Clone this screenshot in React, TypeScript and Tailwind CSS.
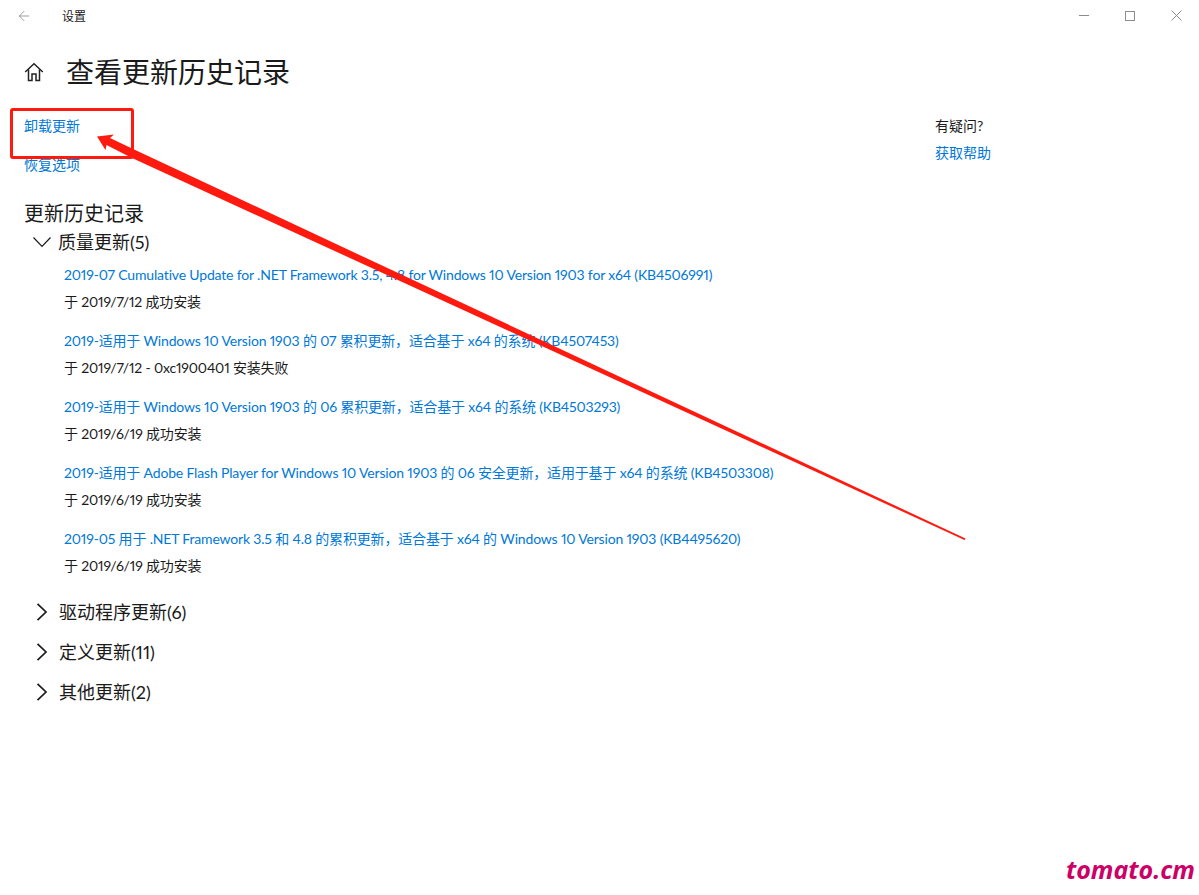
import { ArrowLeft } from 'lucide-react';

const font = { fontFamily: 'Lato, "Noto Sans CJK SC", sans-serif' };

const UPDATES = [
    {
        title: '2019-07 Cumulative Update for .NET Framework 3.5, 4.8 for Windows 10 Version 1903 for x64 (KB4506991)',
        status: '于 2019/7/12 成功安装',
    },
    {
        title: '2019-适用于 Windows 10 Version 1903 的 07 累积更新，适合基于 x64 的系统 (KB4507453)',
        status: '于 2019/7/12 - 0xc1900401 安装失败',
    },
    {
        title: '2019-适用于 Windows 10 Version 1903 的 06 累积更新，适合基于 x64 的系统 (KB4503293)',
        status: '于 2019/6/19 成功安装',
    },
    {
        title: '2019-适用于 Adobe Flash Player for Windows 10 Version 1903 的 06 安全更新，适用于基于 x64 的系统 (KB4503308)',
        status: '于 2019/6/19 成功安装',
    },
    {
        title: '2019-05 用于 .NET Framework 3.5 和 4.8 的累积更新，适合基于 x64 的 Windows 10 Version 1903 (KB4495620)',
        status: '于 2019/6/19 成功安装',
    },
];

const GROUPS = ['驱动程序更新(6)', '定义更新(11)', '其他更新(2)'];

const WindowButtons = () => (
    <svg className="mr-[17px] text-[#8c8c8c]" width="103" height="12" viewBox="0 0 103 12" fill="none" stroke="currentColor">
        <path d="M0 5.5H10" />
        <rect x="46.5" y="1.5" width="9" height="9" />
        <path d="M92.5 .5L102.5 10.5M102.5 .5L92.5 10.5" />
    </svg>
);

const HomeIcon = () => (
    <svg className="ml-[24px]" width="20" height="20" viewBox="0 0 20 20" fill="none" stroke="#222" strokeWidth="1.5">
        <path d="M1.2 10L10 1.8 18.8 10" />
        <path d="M4.5 7.5V18.5H8V12H12V18.5H15.5V7.5" />
    </svg>
);

const Expanded = () => (
    <svg className="ml-[9px]" width="18" height="12" viewBox="0 0 18 12" fill="none" stroke="#1a1a1a" strokeWidth="1.2">
        <path d="M.5 1.5L9 10.5 17.5 1.5" />
    </svg>
);

const Collapsed = () => (
    <svg className="ml-[12px]" width="12" height="18" viewBox="0 0 12 18" fill="none" stroke="#1a1a1a" strokeWidth="1.7">
        <path d="M1.5 .8L10 9 1.5 17.2" />
    </svg>
);

export default function App() {
    return (
        <div className="relative h-[895px] w-[1199px] overflow-hidden bg-white text-[#1a1a1a] proportional-nums" style={font}>
            {/* title bar */}
            <div className="flex h-8 items-center">
                <ArrowLeft className="ml-[16px] h-4 w-4 text-[#8c8c8c]" strokeWidth={1.25} />
                <span className="ml-[30px] mt-0.5 text-xs leading-4">设置</span>
                <div className="ml-auto">
                    <WindowButtons />
                </div>
            </div>

            {/* page header */}
            <div className="mt-[18px] flex h-11 items-center">
                <HomeIcon />
                <h1 className="ml-[22px] text-[28px] leading-10">查看更新历史记录</h1>
            </div>

            <div className="mt-[5px] flex">
                <div className="ml-6 w-[911px]">
                    <a className="mt-[17px] block text-sm leading-5 text-[#0078d7]">卸载更新</a>
                    <a className="mt-[19px] block text-sm leading-5 text-[#0078d7]">恢复选项</a>
                    <h2 className="mt-6 text-xl leading-7">更新历史记录</h2>

                    <div className="flex h-[29px] items-center text-lg">
                        <Expanded />
                        <span className="ml-[7px] leading-6">质量更新(5)</span>
                    </div>

                    <div className="ml-10 mt-[9px] flex flex-col gap-[19px] text-sm leading-5 tracking-[-0.17px]">
                        {UPDATES.map((u) => (
                            <div key={u.title}>
                                <a className="block whitespace-nowrap text-[#0078d7]">{u.title}</a>
                                <p className="mt-[7px] whitespace-nowrap">{u.status}</p>
                            </div>
                        ))}
                    </div>

                    <div className="mt-4 flex flex-col">
                        {GROUPS.map((g) => (
                            <div key={g} className="flex h-10 items-center text-lg">
                                <Collapsed />
                                <span className="ml-[11px] leading-6">{g}</span>
                            </div>
                        ))}
                    </div>
                </div>

                <div className="pt-[17px] text-sm leading-5">
                    <p>有疑问?</p>
                    <a className="mt-[7px] block text-[#0078d7]">获取帮助</a>
                </div>
            </div>

            <div
                className="absolute bottom-[10px] right-[4px] text-[25px] font-bold italic leading-8 text-[#cc0066]"
                style={{ fontFamily: '"Open Sans", sans-serif' }}
            >
                tomato.cm
            </div>

            {/* red annotation drawn over the page */}
            <div className="absolute left-[10px] top-[108px] h-[51px] w-[124px] rounded-[3px] border-[3px] border-[#ff1a10]" />
            <svg className="absolute left-0 top-0" width="1199" height="895" viewBox="0 0 1199 895">
                <polygon
                    fill="#ff1a10"
                    points="97,136.5 114,134.5 110,138 132,148.5 965.5,538.5 964.5,540 132,158 106.5,145 105.5,150"
                />
            </svg>
        </div>
    );
}
